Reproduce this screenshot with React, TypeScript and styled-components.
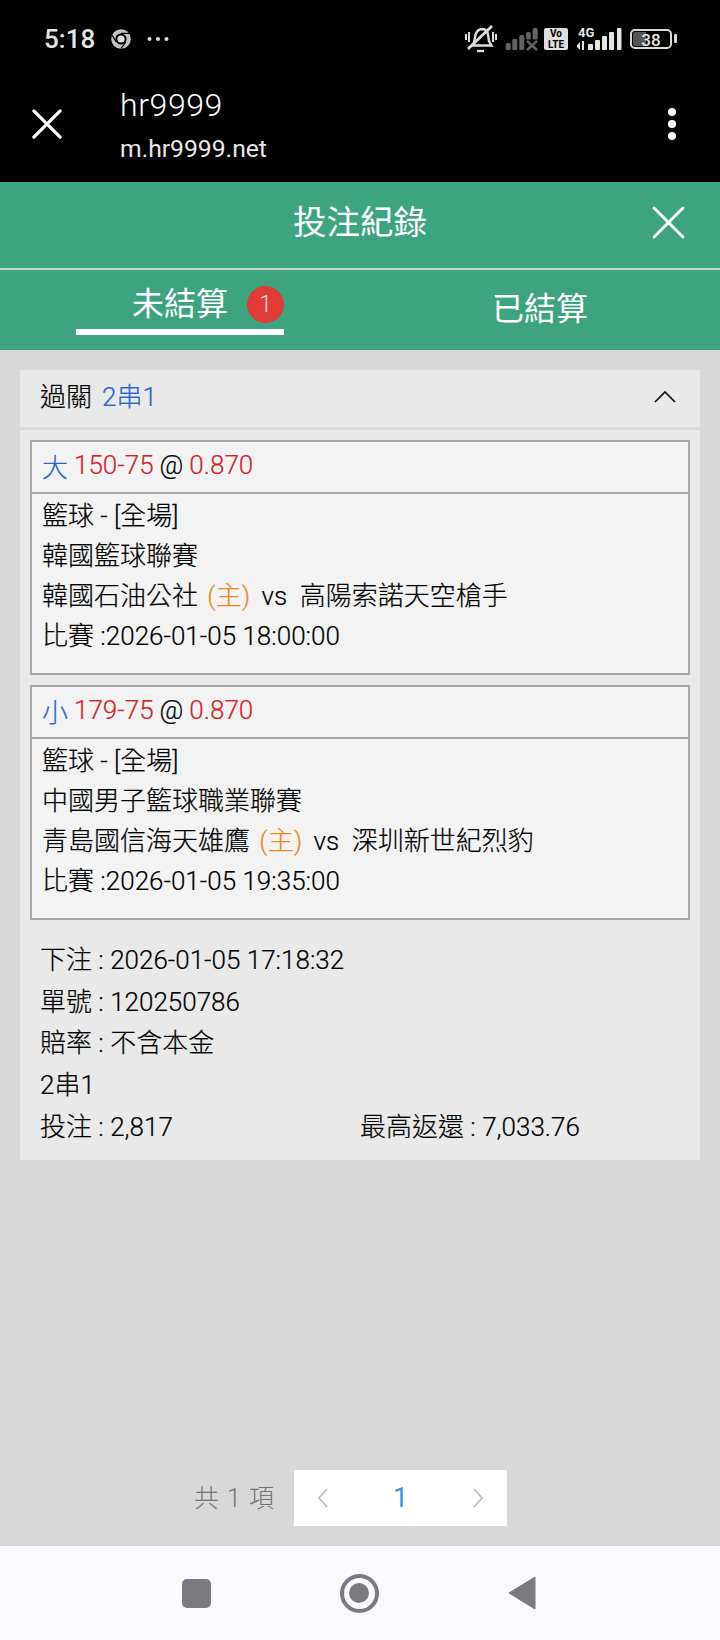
import * as React from 'react';
import styled, { createGlobalStyle } from 'styled-components';

const FONT = `Roboto, "Noto Sans CJK TC", sans-serif`;

const GlobalStyle = createGlobalStyle`
  html, body {
    margin: 0;
    padding: 0;
    background: #d8d8d8;
  }
  * {
    box-sizing: border-box;
  }
`;

const Page = styled.div`
  width: 720px;
  height: 1640px;
  display: flex;
  flex-direction: column;
  font-family: ${FONT};
  font-weight: 300;
  background: #d8d8d8;
  color: #000;
`;

const BrowserBar = styled.div`
  height: 182px;
  background: #000;
  color: #fff;
  padding: 24px 43px 0 44px;
  display: flex;
  flex-direction: column;
`;

const StatusRow = styled.div`
  height: 30px;
  display: flex;
  align-items: center;
  justify-content: space-between;
`;

const StatusLeft = styled.div`
  display: flex;
  align-items: center;
  gap: 16px;
  color: #e4e4e4;
  font-size: 26px;
  font-weight: 500;
`;

const StatusRight = styled.div`
  display: flex;
  align-items: center;
  gap: 8px;
`;

const UrlRow = styled.div`
  display: flex;
  align-items: center;
  margin-top: 31px;
  margin-left: -12px;
`;

const UrlIcon = styled.div`
  display: flex;
  margin-bottom: 11px;
`;

const UrlText = styled.div`
  margin-left: 58px;
  flex: 1;
`;

const SiteName = styled.div`
  font-size: 32px;
  font-weight: 300;
  line-height: 40px;
  letter-spacing: 0.6px;
`;

const SiteUrl = styled.div`
  font-size: 24.7px;
  font-weight: 400;
  line-height: 48px;
  color: #e8e8e8;
`;

const TitleBar = styled.div`
  height: 88px;
  background: #3ea47f;
  border-bottom: 2px solid #c4d8d0;
  padding-bottom: 12px;
  display: flex;
  align-items: center;
  justify-content: center;
  position: relative;
  color: #fff;
  font-size: 33.5px;
  font-weight: 400;
`;

const CloseButton = styled.div`
  position: absolute;
  right: 35px;
  top: 24px;
  display: flex;
`;

const Tabs = styled.div`
  height: 80px;
  background: #3ea47f;
  display: flex;
  color: #fff;
  font-size: 32px;
  font-weight: 400;
`;

const Tab = styled.div<{ $active?: boolean; $left: number }>`
  margin-left: ${p => p.$left}px;
  width: 208px;
  height: 65px;
  display: flex;
  align-items: center;
  justify-content: ${p => (p.$active ? 'flex-start' : 'center')};
  padding: ${p => (p.$active ? '10px 0 0 56px' : '20px 0 0')};
  gap: 19px;
  white-space: nowrap;
  border-bottom: ${p => (p.$active ? '6px solid #fff' : '6px solid transparent')};
`;

const TabLabel = styled.span`
  margin-bottom: 8px;
`;

const Badge = styled.span`
  flex: none;
  width: 37px;
  height: 37px;
  border-radius: 50%;
  background: #df3b37;
  color: #f3dcdc;
  font-size: 23px;
  font-weight: 300;
  display: flex;
  align-items: center;
  justify-content: center;
`;

const Content = styled.div`
  flex: 1;
  padding: 20px 20px 0;
  display: flex;
  flex-direction: column;
`;

const Card = styled.div`
  background: #e9e9e9;
  -webkit-text-stroke: 0.2px;
`;

const CardHeader = styled.div`
  height: 60px;
  border-bottom: 3px solid #dadada;
  padding: 0 24px 8px 20px;
  display: flex;
  align-items: center;
  justify-content: space-between;
  font-size: 26px;
`;

const HeaderLabel = styled.div`
  display: flex;
  gap: 10px;
`;

const HeaderChevron = styled.div`
  display: flex;
  margin-top: 4px;
`;

const Blue = styled.span`
  color: #2a63cc;
`;

const Red = styled.span`
  color: #d3232b;
`;

const Orange = styled.span`
  color: #ee8a1a;
  margin: 0 5px 0 3px;
`;

const CardBody = styled.div`
  padding: 10px 10px 0;
  display: flex;
  flex-direction: column;
  gap: 10px;
`;

const BetBox = styled.div`
  height: 235px;
  border: 2px solid #a6a6a6;
  background: #f3f3f3;
`;

const BetTitle = styled.div`
  height: 52px;
  border-bottom: 2px solid #a6a6a6;
  padding: 0 0 4px 10px;
  display: flex;
  align-items: center;
  gap: 6px;
  font-size: 26px;
`;

const BetLines = styled.div`
  padding: 0 10px;
  font-size: 26px;
`;

const BetLine = styled.div`
  height: 40px;
  padding-bottom: 2px;
  display: flex;
  align-items: center;
  white-space: pre;
`;

const Summary = styled.div`
  padding: 17px 20px 15px;
  font-size: 26px;
`;

const SummaryRow = styled.div`
  height: 41.6px;
  display: flex;
  align-items: center;
`;

const SummaryCell = styled.div`
  width: 320px;
`;

const Pagination = styled.div`
  margin-top: auto;
  margin-bottom: 20px;
  padding-right: 193px;
  display: flex;
  align-items: center;
  justify-content: flex-end;
  font-size: 25px;
  color: #747474;
`;

const Total = styled.div`
  margin: 0 20px 5px 0;
  word-spacing: 2px;
`;

const Pager = styled.div`
  width: 213px;
  height: 56px;
  background: #fff;
  display: flex;
  align-items: center;
  justify-content: space-between;
  padding: 0 23px;
  color: #4a94d4;
  font-size: 27px;
  font-weight: 400;
`;

const NavBar = styled.div`
  height: 94px;
  background: #faf9ff;
  display: flex;
  align-items: center;
  justify-content: center;
  gap: 129px;
  padding-right: 3px;
`;

const NavSquare = styled.div`
  width: 29px;
  height: 29px;
  border-radius: 5px;
  background: #7b7b7f;
`;

const NavCircle = styled.div`
  width: 39px;
  height: 39px;
  border-radius: 50%;
  border: 4px solid #7b7b7f;
  display: flex;
  align-items: center;
  justify-content: center;
  &::after {
    content: '';
    width: 20px;
    height: 20px;
    border-radius: 50%;
    background: #7b7b7f;
  }
`;

const ChromeIcon = () => (
  <svg width="20" height="20" viewBox="0 0 20 20">
    <circle cx="10" cy="10" r="9.8" fill="#c4c4c4" />
    <circle cx="10" cy="10" r="5.6" fill="#000" />
    <circle cx="10" cy="10" r="3.6" fill="#dcdcdc" />
    <path d="M10 4.4H19M5 12.8L1 6M14.8 13L10 19.5" stroke="#000" strokeWidth="1.2" />
  </svg>
);

const Dots = () => (
  <svg width="22" height="6" viewBox="0 0 22 6">
    <circle cx="2.5" cy="3" r="2" fill="#ddd" />
    <circle cx="11" cy="3" r="2" fill="#ddd" />
    <circle cx="19.5" cy="3" r="2" fill="#ddd" />
  </svg>
);

const MuteBell = () => (
  <svg width="32" height="28" viewBox="0 0 32 28" fill="none" stroke="#ddd" strokeWidth="2.4">
    <path d="M8 20c2-3 1.5-7 2.5-10 1-3.5 3.5-6 7-6 3.5.2 5 2.5 5.5 5.5l1 6.5 2.5 4.500H7" />
    <path d="M3 24L27 1" strokeWidth="2.8" />
    <path d="M12 26h7" strokeWidth="2.4" />
    <path d="M1 9v6M4 7v10M28 7v10M31 9v6" strokeWidth="2" />
  </svg>
);

const SimOneSignal = () => (
  <svg width="33" height="23" viewBox="0 0 33 23">
    <g fill="#636363">
      <rect x="0.700" y="15" width="5" height="7" rx="1.500" />
      <rect x="7.300" y="11" width="5" height="11" rx="1.500" />
      <rect x="14.300" y="7" width="5" height="15" rx="1.500" />
      <rect x="21" y="4" width="4.700" height="7.500" rx="1.500" />
      <rect x="27.700" y="0" width="5" height="11.500" rx="1.500" />
    </g>
    <path d="M22 13l10 9M32 13l-10 9" stroke="#636363" strokeWidth="2.400" />
  </svg>
);

const VoLteMark = styled.div`
  width: 24px;
  height: 22px;
  margin-left: -2px;
  border-radius: 2px;
  background: #dedede;
  color: #000;
  font-size: 10px;
  font-weight: 700;
  line-height: 10.5px;
  text-align: center;
  padding-top: 1px;
`;

const NetMark = styled.div`
  width: 46px;
  height: 23px;
  position: relative;
  color: #e4e4e4;
  font-size: 13px;
  font-weight: 700;
  line-height: 10px;
  padding-left: 2px;
`;

const NetBars = styled.svg`
  position: absolute;
  left: 0;
  bottom: 0;
`;

const Battery = styled.div`
  width: 42px;
  height: 20px;
  border: 2px solid #d8d8d8;
  border-radius: 5px;
  position: relative;
  margin-right: 5px;
  color: #e4e4e4;
  font-size: 17px;
  font-weight: 500;
  line-height: 16px;
  text-align: center;
  background: linear-gradient(90deg, #555 38%, transparent 38%);
  background-clip: content-box;
  padding: 1px;
  &::after {
    content: '';
    position: absolute;
    right: -7px;
    top: 3px;
    width: 3px;
    height: 9px;
    border-radius: 1px;
    background: #d8d8d8;
  }
`;

const CrossIcon = ({ size, weight }: { size: number; weight: number }) => (
  <svg width={size} height={size} viewBox="0 0 32 32" fill="none" stroke="#fff" strokeWidth={weight} strokeLinecap="round">
    <path d="M2 2L30 30M30 2L2 30" />
  </svg>
);

const MoreIcon = () => (
  <svg width="10" height="34" viewBox="0 0 10 34" fill="#fff">
    <circle cx="5" cy="5" r="4" />
    <circle cx="5" cy="17" r="4" />
    <circle cx="5" cy="29" r="4" />
  </svg>
);

const Chevron = ({ path, color, w, h, stroke }: { path: string; color: string; w: number; h: number; stroke: number }) => (
  <svg width={w} height={h} viewBox={`0 0 ${w} ${h}`} fill="none" stroke={color} strokeWidth={stroke}>
    <path d={path} />
  </svg>
);

const bets = [
  {
    side: '大',
    line: '150-75',
    league: '韓國籃球聯賽',
    home: '韓國石油公社',
    away: '高陽索諾天空槍手',
    time: '2026-01-05 18:00:00',
  },
  {
    side: '小',
    line: '179-75',
    league: '中國男子籃球職業聯賽',
    home: '青島國信海天雄鷹',
    away: '深圳新世紀烈豹',
    time: '2026-01-05 19:35:00',
  },
];

export default function App() {
  return (
    <Page>
      <GlobalStyle />
      <BrowserBar>
        <StatusRow>
          <StatusLeft>
            <span>5:18</span>
            <ChromeIcon />
            <Dots />
          </StatusLeft>
          <StatusRight>
            <MuteBell />
            <SimOneSignal />
            <VoLteMark>
              Vo
              <br />
              LTE
            </VoLteMark>
            <NetMark>
              4G
              <NetBars width="46" height="23" viewBox="0 0 46 23" fill="#e4e4e4">
                <path d="M1 17l3-3v8l-3-3zM6 13h2v9H6z" />
                <rect x="12" y="16" width="5" height="6" rx="1" />
                <rect x="19" y="12" width="5" height="10" rx="1" />
                <rect x="26" y="8" width="5" height="14" rx="1" />
                <rect x="33" y="4" width="5" height="18" rx="1" />
                <rect x="41" y="0" width="4.500" height="22" rx="1" />
              </NetBars>
            </NetMark>
            <Battery>38</Battery>
          </StatusRight>
        </StatusRow>
        <UrlRow>
          <UrlIcon>
            <CrossIcon size={30} weight={3.4} />
          </UrlIcon>
          <UrlText>
            <SiteName>hr9999</SiteName>
            <SiteUrl>m.hr9999.net</SiteUrl>
          </UrlText>
          <UrlIcon>
            <MoreIcon />
          </UrlIcon>
        </UrlRow>
      </BrowserBar>

      <TitleBar>
        投注紀錄
        <CloseButton>
          <CrossIcon size={33} weight={2.8} />
        </CloseButton>
      </TitleBar>

      <Tabs>
        <Tab $active $left={76}>
          <TabLabel>未結算</TabLabel>
          <Badge>1</Badge>
        </Tab>
        <Tab $left={152}>
          <TabLabel>已結算</TabLabel>
        </Tab>
      </Tabs>

      <Content>
        <Card>
          <CardHeader>
            <HeaderLabel>
              過關 <Blue>2串1</Blue>
            </HeaderLabel>
            <HeaderChevron>
              <Chevron path="M1 12L11 2L21 12" color="#111" w={22} h={14} stroke={1.7} />
            </HeaderChevron>
          </CardHeader>
          <CardBody>
            {bets.map(bet => (
              <BetBox key={bet.line}>
                <BetTitle>
                  <Blue>{bet.side}</Blue>
                  <Red>{bet.line}</Red>
                  <span>@</span>
                  <Red>0.870</Red>
                </BetTitle>
                <BetLines>
                  <BetLine>籃球 - [全場]</BetLine>
                  <BetLine>{bet.league}</BetLine>
                  <BetLine>
                    {bet.home} <Orange>(主)</Orange> vs  {bet.away}
                  </BetLine>
                  <BetLine>比賽 :{bet.time}</BetLine>
                </BetLines>
              </BetBox>
            ))}
          </CardBody>
          <Summary>
            <SummaryRow>下注 : 2026-01-05 17:18:32</SummaryRow>
            <SummaryRow>單號 : 120250786</SummaryRow>
            <SummaryRow>賠率 : 不含本金</SummaryRow>
            <SummaryRow>2串1</SummaryRow>
            <SummaryRow>
              <SummaryCell>投注 : 2,817</SummaryCell>
              <div>最高返還 : 7,033.76</div>
            </SummaryRow>
          </Summary>
        </Card>
        <Pagination>
          <Total>共 1 項</Total>
          <Pager>
            <Chevron path="M10 1L2 10L10 19" color="#bcbcc4" w={11} h={20} stroke={1.8} />
            1
            <Chevron path="M1 1L9 10L1 19" color="#bcbcc4" w={11} h={20} stroke={1.8} />
          </Pager>
        </Pagination>
      </Content>

      <NavBar>
        <NavSquare />
        <NavCircle />
        <svg width="28" height="34" viewBox="0 0 28 34">
          <path d="M27 1V33L1 17Z" fill="#7b7b7f" stroke="#7b7b7f" strokeLinejoin="round" />
        </svg>
      </NavBar>
    </Page>
  );
}
